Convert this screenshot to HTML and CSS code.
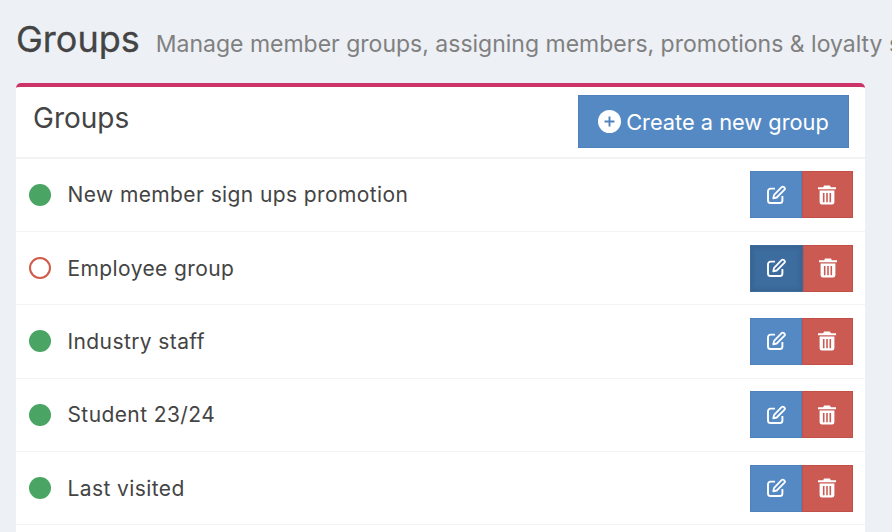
FILE: index.html
```html
<!DOCTYPE html>
<html lang="en">
<head>
  <meta charset="UTF-8">
  <title>Groups</title>
  <link rel="stylesheet" href="styles.css">
</head>
<body>
  <svg class="icon-defs" width="0" height="0">
    <symbol id="icon-edit" viewBox="0 0 20 20">
      <path d="M9 3.6H4.6A2.6 2.6 0 0 0 2 6.2v9.2A2.6 2.6 0 0 0 4.6 18h9.2a2.6 2.6 0 0 0 2.6-2.6V11" fill="none" stroke="currentColor" stroke-width="1.9"/>
      <path d="M15.6 2.2a1.7 1.7 0 0 1 2.4 0l.3.3a1.7 1.7 0 0 1 0 2.4l-7.6 7.6-3.4 .8 .8-3.4z" fill="none" stroke="currentColor" stroke-width="1.8" stroke-linejoin="round"/>
    </symbol>
    <symbol id="icon-trash" viewBox="0 0 20 20">
      <path d="M7 .5h6l.8 1.800H19v2H1v-2h5.200z" fill="currentColor"/>
      <path fill-rule="evenodd" d="M2.600 5.600h14.800v11.700a2.300 2.300 0 0 1-2.300 2.300H4.900a2.300 2.300 0 0 1-2.300-2.300zM5.900 8v9.300h1.600V8zM9.200 8v9.300h1.600V8zM12.500 8v9.300h1.600V8z" fill="currentColor"/>
    </symbol>
  </svg>

  <header class="page-head">
    <h1>Groups</h1>
    <span class="subtitle">Manage member groups, assigning members, promotions &amp; loyalty schemes</span>
  </header>

  <section class="card">
    <div class="card-head">
      <h2>Groups</h2>
      <button class="btn btn-create">
        <svg class="plus" viewBox="0 0 24 24" width="23" height="23">
          <circle cx="12" cy="12" r="12" fill="#fff"/>
          <path d="M12 6.800v10.400M6.800 12h10.400" stroke="#4f82bc" stroke-width="2"/>
        </svg>
        Create a new group
      </button>
    </div>

    <div class="row">
      <span class="dot"></span>
      <span class="name">New member sign ups promotion</span>
      <div class="actions">
        <button class="btn btn-edit"><svg class="ico"><use href="#icon-edit"/></svg></button>
        <button class="btn btn-del"><svg class="ico"><use href="#icon-trash"/></svg></button>
      </div>
    </div>
    <div class="row">
      <span class="dot off"></span>
      <span class="name">Employee group</span>
      <div class="actions">
        <button class="btn btn-edit active"><svg class="ico"><use href="#icon-edit"/></svg></button>
        <button class="btn btn-del"><svg class="ico"><use href="#icon-trash"/></svg></button>
      </div>
    </div>
    <div class="row">
      <span class="dot"></span>
      <span class="name">Industry staff</span>
      <div class="actions">
        <button class="btn btn-edit"><svg class="ico"><use href="#icon-edit"/></svg></button>
        <button class="btn btn-del"><svg class="ico"><use href="#icon-trash"/></svg></button>
      </div>
    </div>
    <div class="row">
      <span class="dot"></span>
      <span class="name">Student 23/24</span>
      <div class="actions">
        <button class="btn btn-edit"><svg class="ico"><use href="#icon-edit"/></svg></button>
        <button class="btn btn-del"><svg class="ico"><use href="#icon-trash"/></svg></button>
      </div>
    </div>
    <div class="row">
      <span class="dot"></span>
      <span class="name">Last visited</span>
      <div class="actions">
        <button class="btn btn-edit"><svg class="ico"><use href="#icon-edit"/></svg></button>
        <button class="btn btn-del"><svg class="ico"><use href="#icon-trash"/></svg></button>
      </div>
    </div>
  </section>
</body>
</html>
```

FILE: styles.css
```css
html, body {
  height: 532px;
  overflow: hidden;
}

body {
  margin: 0;
  padding: 0 27px 0 16px;
  background-color: #edf0f5;
  color: #444;
  font-family: Inter, sans-serif;
}

.icon-defs {
  position: absolute;
}

.page-head {
  display: flex;
  align-items: baseline;
  height: 83px;
  padding: 16px 0 0 0;
  box-sizing: border-box;
  white-space: nowrap;
}

h1 {
  margin: 0 16px 0 0;
  font-size: 36px;
  font-weight: 400;
  line-height: 46px;
  color: #444;
  -webkit-text-stroke: 0.3px #444;
}

.subtitle {
  font-size: 23px;
  color: #808080;
}

.card {
  height: 449px;
  background: #fff;
  border-top: 4px solid #cc3366;
  border-radius: 5px 5px 0 0;
}

.card-head {
  display: flex;
  justify-content: space-between;
  align-items: flex-start;
  box-sizing: border-box;
  height: 71.700px;
  padding: 8px 16px 0 17px;
  border-bottom: 2px solid #f3f3f4;
}

h2 {
  margin: 0;
  padding-top: 5px;
  font-size: 28px;
  font-weight: 400;
  line-height: 36px;
  color: #444;
}

.btn {
  border: 1px solid #4f82bc;
  background: #5589c4;
  color: #fff;
  font-family: inherit;
  padding: 0;
}

.btn-create {
  display: flex;
  align-items: center;
  justify-content: center;
  gap: 5px;
  width: 271px;
  height: 53px;
  font-size: 21.800px;
}

.row {
  display: flex;
  align-items: center;
  height: 72.300px;
  padding: 0 12px 0 13px;
  border-bottom: 1px solid #f3f3f4;
}

.dot {
  width: 22px;
  height: 22px;
  border-radius: 50%;
  background: #4aa564;
  box-sizing: border-box;
}

.dot.off {
  background: #fff;
  border: 2.400px solid #cf5c48;
}

.name {
  margin-left: 16.500px;
  font-size: 21px;
  letter-spacing: 0.4px;
  color: #444;
}

.actions {
  display: flex;
  margin-left: auto;
}

.actions .btn {
  display: flex;
  align-items: center;
  justify-content: center;
  width: 52px;
  height: 47px;
  flex-shrink: 0;
}

.actions .btn-del {
  width: 51px;
  padding-right: 1px;
  background: #ca5a52;
  border-color: #c44f47;
}

.actions .btn-edit.active {
  width: 53px;
  padding-right: 1px;
  background: #3d6c9f;
  border-color: #3d6c9f;
  box-shadow: inset 0 0 6px rgba(0, 0, 0, 0.15);
}

.actions .btn-edit.active + .btn-del {
  width: 50px;
}

.ico {
  width: 20px;
  height: 20px;
  color: #fff;
}
```
